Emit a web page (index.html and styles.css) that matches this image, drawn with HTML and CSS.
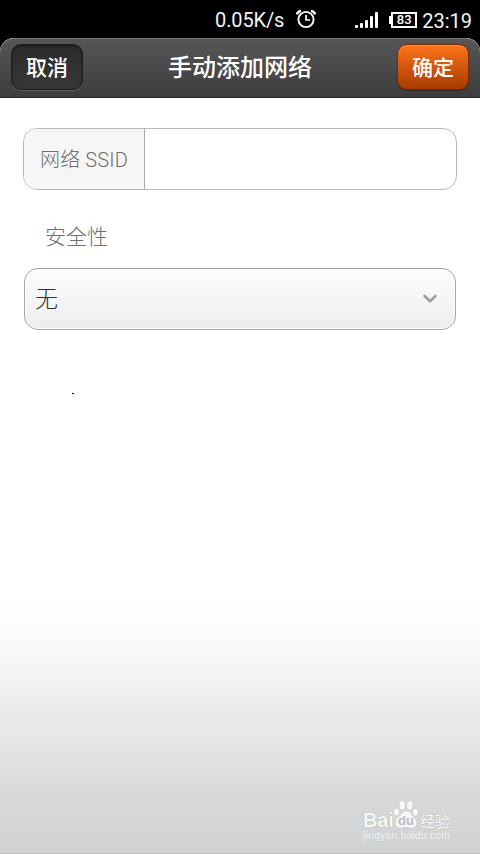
FILE: index.html
```html
<!DOCTYPE html>
<html lang="zh-CN">
<head>
<meta charset="utf-8">
<title>手动添加网络</title>
<link rel="stylesheet" href="styles.css">
</head>
<body>
<div class="status">
  <span class="speed">0.05K/s</span>
  <svg class="alarm" width="22" height="20" viewBox="0 0 22 20" fill="none" stroke="#fff">
    <circle cx="11" cy="10.500" r="7.600" stroke-width="1.900"/>
    <path d="M11 6v5h4" stroke-width="1.700"/>
    <path d="M1.800 5.400Q2.600 2.500 6 1.900M20.200 5.400Q19.400 2.500 16 1.900" stroke-width="2.300"/>
  </svg>
  <svg class="signal" width="24" height="16" viewBox="0 0 24 16" fill="#fff">
    <rect x="0" y="13" width="3" height="3" rx="1"/>
    <rect x="5" y="11" width="3" height="5" rx="1"/>
    <rect x="10" y="8" width="3" height="8" rx="1"/>
    <rect x="15" y="4" width="3" height="12" rx="1"/>
    <rect x="20" y="0" width="3" height="16" rx="1"/>
  </svg>
  <div class="battery"><i class="tip"></i><span class="level">83</span></div>
  <span class="time">23:19</span>
</div>
<main class="screen">
  <header class="bar">
    <button class="btn cancel">取消</button>
    <h1 class="title">手动添加网络</h1>
    <button class="btn ok">确定</button>
  </header>
  <form class="form">
    <label class="ssid"><span class="ssid-label">网络 SSID</span><input class="ssid-input" type="text"></label>
    <div class="caption">安全性</div>
    <div class="select">
      <span class="value">无</span>
      <svg width="16" height="10" viewBox="0 0 16 10" fill="none" stroke="#a0a0a0" stroke-width="2.600" stroke-linecap="round" stroke-linejoin="round"><path d="M2.500 2L8 7.300L13.500 2"/></svg>
    </div>
    <i class="mark"></i>
  </form>
  <div class="watermark">
    <div class="brand">
      <span class="bai">Bai</span>
      <svg class="paw" width="26" height="29" viewBox="0 0 26 29">
        <g fill="#f6f7f8" stroke="#bfc1c3" stroke-width=".6">
          <ellipse cx="3.500" cy="12" rx="3" ry="4" transform="rotate(-12 3.500 12)"/>
          <ellipse cx="9.200" cy="5.200" rx="3.200" ry="4.700"/>
          <ellipse cx="16.800" cy="5.400" rx="3.200" ry="4.600" transform="rotate(10 16.800 5.400)"/>
          <ellipse cx="22.500" cy="12.200" rx="3" ry="4" transform="rotate(10 22.500 12.200)"/>
          <path d="M13 10.800C9.500 10.800 8.500 14.500 5 17.300C.5 21 1.500 28.200 7.500 28.200C10 28.200 11 27.600 13 27.600S17 28.200 19 28.200C24.800 28.200 25.500 21 21.300 17.300C18 14.500 17 10.800 13 10.800Z"/>
        </g>
        <text class="du" x="13" y="25" text-anchor="middle">du</text>
      </svg>
      <span class="jy">经验</span>
    </div>
    <div class="url">jingyan.baidu.com</div>
  </div>
</main>
</body>
</html>
```

FILE: styles.css
```css
* { box-sizing: border-box; }
body {
  margin: 0;
  width: 480px;
  height: 854px;
  overflow: hidden;
  display: flex;
  flex-direction: column;
  background: #000;
  font-family: Roboto, "Noto Sans CJK SC", sans-serif;
}
.status {
  height: 38px;
  display: flex;
  align-items: center;
  justify-content: flex-end;
  padding: 2px 8px 0 0;
  color: #f4f4f4;
  font-size: 20px;
}
.speed { letter-spacing: -.15px; }
.time { padding-top: 1px; }
.alarm { margin: -2px 0 0 11px; }
.signal { margin-left: 38px; }
.battery { display: flex; align-items: center; margin: 0 5px 0 10px; }
.tip { width: 2px; height: 8px; background: #fff; }
.level {
  width: 26px;
  height: 16px;
  border: 2px solid #fff;
  color: #fff;
  font: 500 13px/12px Roboto, sans-serif;
  text-align: center;
}
.screen {
  flex: 1;
  display: flex;
  flex-direction: column;
  border-bottom: 1px solid #c2c3c4;
  border-radius: 14px 14px 0 0;
  background: linear-gradient(#fff 0 560px, #fafbfb 602px, #e9ebeb 674px, #e2e3e5 710px, #d7d8da 765px, #d0d1d2 816px);
}
.bar {
  height: 60px;
  display: flex;
  align-items: flex-start;
  justify-content: space-between;
  padding: 6px 11px 0;
  border-top: 1px solid #777;
  border-bottom: 1px solid #2b2828;
  border-radius: 14px 14px 0 0;
  background: linear-gradient(#565656, #3d3d3d);
}
.btn {
  width: 72px;
  height: 46px;
  margin: -1px 0 0;
  padding: 0 0 3px;
  border: 1px solid #1d1d1d;
  border-radius: 10px;
  color: #fff;
  font: 500 21px/30px "Noto Sans CJK SC", sans-serif;
}
.cancel {
  background: linear-gradient(#2b2b2b, #373737);
  box-shadow: 0 1px 0 #606060, inset 0 1px 2px #1b1b1b;
}
.ok {
  border-color: #7c2b04;
  background: linear-gradient(#fc741a, #a83a02);
  box-shadow: 0 1px 1px #282828, inset 0 1px 0 #ff8f3d;
}
.title {
  margin: 3px 0 0;
  color: #fff;
  font: 500 24px/36px "Noto Sans CJK SC", sans-serif;
}
.form { flex: 1; padding: 30px 23px 0; }
.ssid {
  display: flex;
  height: 62px;
  border: 1px solid #b9b9b9;
  border-radius: 14px;
  background: #fff;
  overflow: hidden;
}
.ssid-label {
  width: 121px;
  border-right: 1px solid #aaa;
  background: #f6f6f6;
  color: #6e6e6e;
  font: 300 20px/62px Roboto, "Noto Sans CJK SC", sans-serif;
  letter-spacing: .15px;
  padding-left: 16px;
  white-space: nowrap;
}
.ssid-input { flex: 1; min-width: 0; border: 0; background: none; outline: 0; }
.caption {
  margin: 30px 0 17px 22px;
  color: #6e6e6e;
  font: 300 21px/31px "Noto Sans CJK SC", sans-serif;
}
.select {
  display: flex;
  align-items: center;
  justify-content: space-between;
  height: 62px;
  margin: 0 1px;
  padding: 0 17px 0 10px;
  border: 1px solid #a6a6a6;
  border-radius: 14px;
  background: linear-gradient(#fefefe, #ededed);
  box-shadow: inset 0 0 0 1px #fff;
}
.value {
  color: #303030;
  font: 300 23px/56px "Noto Sans CJK SC", sans-serif;
  padding-bottom: 4px;
}
.mark { display: block; width: 2px; height: 1px; margin: 63px 0 0 49px; background: #000; }
.watermark {
  align-self: flex-end;
  width: 90px;
  margin: 0 27px 11px 0;
  color: #f6f7f8;
}
.brand { display: flex; align-items: flex-end; height: 29px; text-shadow: 0 0 1px #999; }
.bai { font: bold 20px/17px "Liberation Sans", sans-serif; width: 30px; letter-spacing: -.2px; }
.paw { flex: none; }
.du { font: bold 13px "Liberation Sans", sans-serif; fill: #b9bbbd; text-shadow: none; }
.jy { font: 500 15px/17px "Noto Sans CJK SC", sans-serif; white-space: nowrap; margin-left: 1px; }
.url { font: 10.5px/13px "Liberation Sans", sans-serif; letter-spacing: .15px; white-space: nowrap; text-shadow: 0 0 1px #bbb; }
```
